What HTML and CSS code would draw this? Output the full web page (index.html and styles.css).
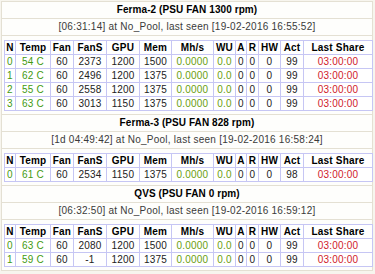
FILE: index.html
```html
<!DOCTYPE html>
<html>
<head>
<meta charset="utf-8">
<link rel="stylesheet" href="styles.css">
</head>
<body>
<div class="panel">
  <section class="rig">
    <div class="title">Ferma-2 (PSU FAN 1300 rpm)</div>
    <div class="info">[06:31:14] at No_Pool, last seen [19-02-2016 16:55:52]</div>
    <div class="grid-cell">
      <table class="gpus">
        <colgroup><col class="c-n"><col class="c-temp"><col class="c-fan"><col class="c-fans"><col class="c-gpu"><col class="c-mem"><col class="c-mhs"><col class="c-wu"><col class="c-a"><col class="c-r"><col class="c-hw"><col class="c-act"><col class="c-last"></colgroup>
        <tr><th>N</th><th>Temp</th><th>Fan</th><th>FanS</th><th>GPU</th><th>Mem</th><th>Mh/s</th><th>WU</th><th>A</th><th>R</th><th>HW</th><th>Act</th><th>Last Share</th></tr>
        <tr><td class="g">0</td><td class="g">54 C</td><td>60</td><td>2373</td><td>1200</td><td>1500</td><td class="y">0.0000</td><td class="y">0.0</td><td>0</td><td>0</td><td>0</td><td>99</td><td class="r">03:00:00</td></tr>
        <tr><td class="g">1</td><td class="g">62 C</td><td>60</td><td>2496</td><td>1200</td><td>1375</td><td class="y">0.0000</td><td class="y">0.0</td><td>0</td><td>0</td><td>0</td><td>99</td><td class="r">03:00:00</td></tr>
        <tr><td class="g">2</td><td class="g">55 C</td><td>60</td><td>2558</td><td>1200</td><td>1375</td><td class="y">0.0000</td><td class="y">0.0</td><td>0</td><td>0</td><td>0</td><td>99</td><td class="r">03:00:00</td></tr>
        <tr><td class="g">3</td><td class="g">63 C</td><td>60</td><td>3013</td><td>1150</td><td>1375</td><td class="y">0.0000</td><td class="y">0.0</td><td>0</td><td>0</td><td>0</td><td>99</td><td class="r">03:00:00</td></tr>
      </table>
    </div>
  </section>
  <section class="rig">
    <div class="title">Ferma-3 (PSU FAN 828 rpm)</div>
    <div class="info">[1d 04:49:42] at No_Pool, last seen [19-02-2016 16:58:24]</div>
    <div class="grid-cell">
      <table class="gpus">
        <colgroup><col class="c-n"><col class="c-temp"><col class="c-fan"><col class="c-fans"><col class="c-gpu"><col class="c-mem"><col class="c-mhs"><col class="c-wu"><col class="c-a"><col class="c-r"><col class="c-hw"><col class="c-act"><col class="c-last"></colgroup>
        <tr><th>N</th><th>Temp</th><th>Fan</th><th>FanS</th><th>GPU</th><th>Mem</th><th>Mh/s</th><th>WU</th><th>A</th><th>R</th><th>HW</th><th>Act</th><th>Last Share</th></tr>
        <tr><td class="g">0</td><td class="g">61 C</td><td>60</td><td>2534</td><td>1150</td><td>1375</td><td class="y">0.0000</td><td class="y">0.0</td><td>0</td><td>0</td><td>0</td><td>98</td><td class="r">03:00:00</td></tr>
      </table>
    </div>
  </section>
  <section class="rig">
    <div class="title">QVS (PSU FAN 0 rpm)</div>
    <div class="info">[06:32:50] at No_Pool, last seen [19-02-2016 16:59:12]</div>
    <div class="grid-cell">
      <table class="gpus">
        <colgroup><col class="c-n"><col class="c-temp"><col class="c-fan"><col class="c-fans"><col class="c-gpu"><col class="c-mem"><col class="c-mhs"><col class="c-wu"><col class="c-a"><col class="c-r"><col class="c-hw"><col class="c-act"><col class="c-last"></colgroup>
        <tr><th>N</th><th>Temp</th><th>Fan</th><th>FanS</th><th>GPU</th><th>Mem</th><th>Mh/s</th><th>WU</th><th>A</th><th>R</th><th>HW</th><th>Act</th><th>Last Share</th></tr>
        <tr><td class="g">0</td><td class="g">63 C</td><td>60</td><td>2080</td><td>1200</td><td>1500</td><td class="y">0.0000</td><td class="y">0.0</td><td>0</td><td>0</td><td>0</td><td>99</td><td class="r">03:00:00</td></tr>
        <tr><td class="g">1</td><td class="g">59 C</td><td>60</td><td>-1</td><td>1200</td><td>1375</td><td class="y">0.0000</td><td class="y">0.0</td><td>0</td><td>0</td><td>0</td><td>99</td><td class="r">03:00:00</td></tr>
      </table>
    </div>
  </section>
</div>
</body>
</html>
```

FILE: styles.css
```css
html, body {
  margin: 0;
  padding: 0;
  background: #f7f5ee;
}
body {
  font-family: "Liberation Sans", Arial, sans-serif;
  font-size: 10px;
  color: #222;
}
.panel {
  margin-left: 1px;
  margin-top: 1px;
  width: 370px;
  border: 1px solid #e4e0d3;
  border-bottom: none;
  background: #fefefc;
}
.rig {
  display: flex;
  flex-direction: column;
}
.title {
  height: 16px;
  line-height: 16px;
  text-align: center;
  font-weight: bold;
  color: #000;
  letter-spacing: 0.08px;
  border-bottom: 1px solid #e4e0d3;
}
.info {
  height: 16px;
  line-height: 16px;
  text-align: center;
  color: #3a3a3a;
  letter-spacing: 0.25px;
  border-bottom: 1px solid #e4e0d3;
}
.grid-cell {
  padding: 4px 0 3px 2px;
  border-bottom: 1px solid #e4e0d3;
}
.gpus {
  border-collapse: collapse;
  table-layout: fixed;
  width: 368px;
  background: #fff;
}
.gpus th, .gpus td {
  border: 1px solid #c6c6f4;
  padding: 0;
  height: 13px;
  line-height: 13px;
  text-align: center;
  white-space: nowrap;
  overflow: hidden;
  letter-spacing: 0.2px;
}
.gpus th {
  font-weight: bold;
  color: #000;
}
.c-n { width: 11px; }
.c-temp { width: 35px; }
.c-fan { width: 23px; }
.c-fans { width: 33px; }
.c-gpu { width: 33px; }
.c-mem { width: 32px; }
.c-mhs { width: 42px; }
.c-wu { width: 22px; }
.c-a { width: 11px; }
.c-r { width: 12px; }
.c-hw { width: 22px; }
.c-act { width: 23px; }
.c-last { width: 69px; }
.g { color: #3f9a12; }
.y { color: #6a9e10; }
.r { color: #d0202a; }
```
